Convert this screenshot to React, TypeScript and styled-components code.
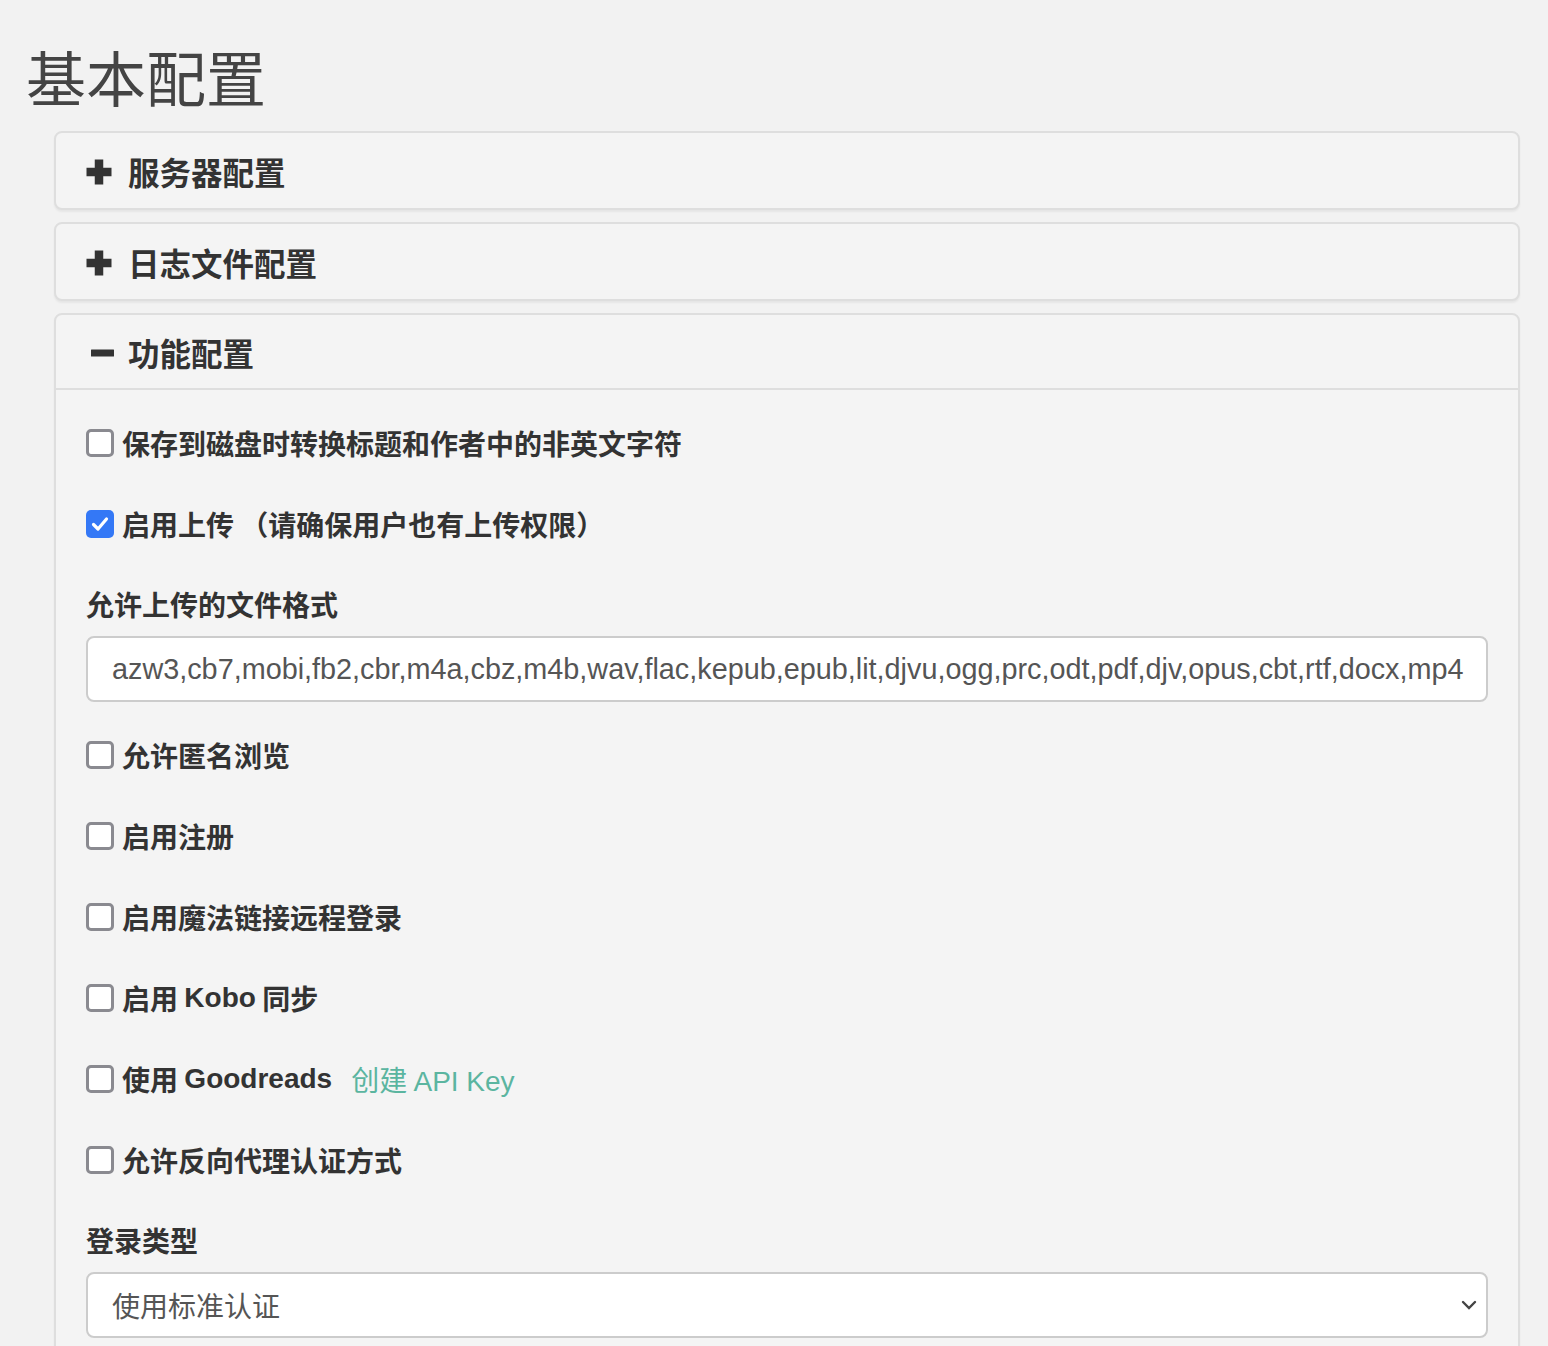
import React from "react";
import styled, {createGlobalStyle} from "styled-components";

const GlobalStyle = createGlobalStyle`
  html, body {
    margin: 0;
    padding: 0;
    background: #f2f2f2;
  }
  body {
    font-family: "Liberation Sans", "Noto Sans CJK SC", sans-serif;
    color: #333;
  }
`;

const Page = styled.div`
  padding: 0 28px 0 26px;
`;

const Title = styled.h1`
  margin: 0;
  padding-top: 43px;
  height: 131px;
  box-sizing: border-box;
  font-family: "Noto Sans CJK SC", sans-serif;
  font-weight: 400;
  font-size: 60px;
  line-height: 1.1;
  color: #444;
`;

const PanelGroup = styled.div`
  margin-left: 28px;
  display: flex;
  flex-direction: column;
  gap: 12px;
`;

const Panel = styled.div`
  background: #f4f4f4;
  border: 2px solid #dedede;
  border-radius: 8px;
  box-shadow: 0 2px 2px rgba(0, 0, 0, 0.05);
`;

const Heading = styled.div<{ $open?: boolean }>`
  height: 75px;
  box-sizing: border-box;
  padding: 3px 30px 0;
  display: flex;
  align-items: center;
  gap: 14px;
  border-bottom: ${p => (p.$open ? "2px solid #dedede" : "none")};
  font-family: "Noto Sans CJK SC", sans-serif;
  font-weight: 700;
  font-size: 31.5px;
  color: #333;
`;

const HeadingText = styled.span`
  line-height: 1;
`;

const Body = styled.div`
  padding: 30px 30px 0;
`;

const CheckRow = styled.label`
  display: flex;
  align-items: center;
  height: 46px;
  margin-bottom: 35px;
  font-family: "Noto Sans CJK SC", sans-serif;
  font-weight: 700;
  font-size: 28px;
  color: #333;
`;

const Box = styled.span<{ $checked?: boolean }>`
  width: 28px;
  height: 28px;
  box-sizing: border-box;
  margin-right: 8px;
  border-radius: 5px;
  border: ${p => (p.$checked ? "none" : "3.5px solid #8a8a90")};
  background: ${p => (p.$checked ? "#3478f6" : "#fff")};
  display: inline-flex;
  align-items: center;
  justify-content: center;
  flex-shrink: 0;
`;

const Latin = styled.span`
  font-family: "Liberation Sans", "Noto Sans CJK SC", sans-serif;
  font-weight: 700;
`;

const Link = styled.a`
  margin-left: 19px;
  color: #5bb5a0;
  font-weight: 400;
  text-decoration: none;
  font-family: "Noto Sans CJK SC", sans-serif;
  & > span {
    font-family: "Liberation Sans", sans-serif;
  }
`;

const FieldLabel = styled.div`
  height: 44px;
  display: flex;
  align-items: center;
  margin-bottom: 10px;
  font-family: "Noto Sans CJK SC", sans-serif;
  font-weight: 700;
  font-size: 28px;
  color: #333;
`;

const Field = styled.div<{ $select?: boolean }>`
  height: 66px;
  box-sizing: border-box;
  margin-bottom: 30px;
  padding: ${p => (p.$select ? "0 9px 0 24px" : "0 24px")};
  background: #fff;
  border: 2px solid #cccccc;
  border-radius: 8px;
  display: flex;
  align-items: center;
  justify-content: space-between;
  font-family: "Liberation Sans", "Noto Sans CJK SC", sans-serif;
  font-size: 28.8px;
  color: #555;
  white-space: nowrap;
  overflow: hidden;
`;

const SelectText = styled.span`
  font-family: "Noto Sans CJK SC", sans-serif;
  font-size: 28px;
  color: #555;
`;

const PlusIcon = () => (
  <svg width="28" height="28" viewBox="0 0 28 28">
    <path d="M8.75 1.5h8.5v8.25h8.25v8.5h-8.25v8.25h-8.5v-8.25h-8.25v-8.5h8.25z" fill="#333"/>
  </svg>
);

const MinusIcon = () => (
  <svg width="28" height="28" viewBox="0 0 28 28">
    <rect x="5" y="10.5" width="23" height="7" rx="0.5" fill="#333"/>
  </svg>
);

const Check = ({checked}: { checked?: boolean }) => (
  <Box $checked={checked}>
    {checked && (
      <svg width="20" height="20" viewBox="0 0 20 20">
        <path d="M3.5 10.5l4.5 4.5 8.5-10" stroke="#fff" strokeWidth="3.2" fill="none"
              strokeLinecap="round" strokeLinejoin="round"/>
      </svg>
    )}
  </Box>
);

const Chevron = () => (
  <svg width="16" height="12" viewBox="0 0 16 12">
    <path d="M2 3l6 6 6-6" stroke="#444" strokeWidth="2.4" fill="none" strokeLinecap="round"/>
  </svg>
);

const formats = "azw3,cb7,mobi,fb2,cbr,m4a,cbz,m4b,wav,flac,kepub,epub,lit,djvu,ogg,prc,odt,pdf,djv,opus,cbt,rtf,docx,mp4";

export default function App() {
  return (
    <Page>
      <GlobalStyle/>
      <Title>基本配置</Title>
      <PanelGroup>
        <Panel>
          <Heading><PlusIcon/><HeadingText>服务器配置</HeadingText></Heading>
        </Panel>
        <Panel>
          <Heading><PlusIcon/><HeadingText>日志文件配置</HeadingText></Heading>
        </Panel>
        <Panel>
          <Heading $open><MinusIcon/><HeadingText>功能配置</HeadingText></Heading>
          <Body>
            <CheckRow><Check/>保存到磁盘时转换标题和作者中的非英文字符</CheckRow>
            <CheckRow><Check checked/>启用上传 （请确保用户也有上传权限）</CheckRow>
            <FieldLabel>允许上传的文件格式</FieldLabel>
            <Field>{formats}</Field>
            <CheckRow><Check/>允许匿名浏览</CheckRow>
            <CheckRow><Check/>启用注册</CheckRow>
            <CheckRow><Check/>启用魔法链接远程登录</CheckRow>
            <CheckRow><Check/>启用&nbsp;<Latin>Kobo</Latin>&nbsp;同步</CheckRow>
            <CheckRow>
              <Check/>使用&nbsp;<Latin>Goodreads</Latin>
              <Link href="#">创建 <span>API Key</span></Link>
            </CheckRow>
            <CheckRow><Check/>允许反向代理认证方式</CheckRow>
            <FieldLabel>登录类型</FieldLabel>
            <Field $select>
              <SelectText>使用标准认证</SelectText>
              <Chevron/>
            </Field>
          </Body>
        </Panel>
      </PanelGroup>
    </Page>
  );
}
